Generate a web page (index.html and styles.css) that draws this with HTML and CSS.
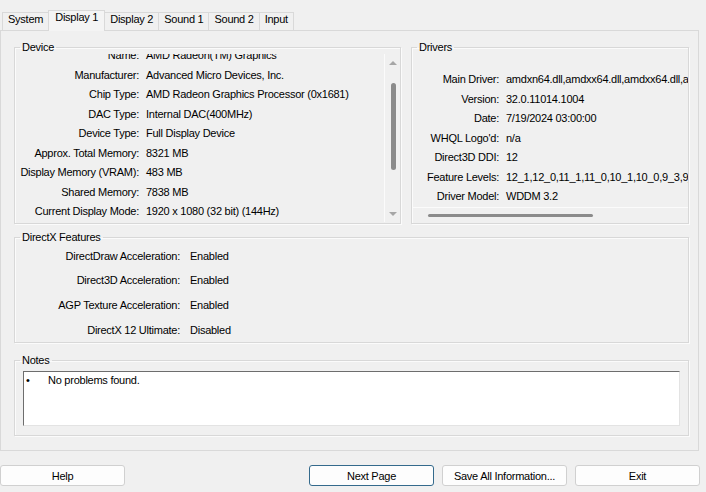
FILE: index.html
```html
<!DOCTYPE html>
<html>

<head>
    <meta name="viewport" content="width=device-width, initial-scale=1">
    <title>DirectX Diagnostic Tool</title>

    <link rel="stylesheet" href="styles.css">

</head>

<body>
    <div class="tabs">
        <div class="tab">System</div>
        <div class="tab active">Display 1</div>
        <div class="tab">Display 2</div>
        <div class="tab">Sound 1</div>
        <div class="tab">Sound 2</div>
        <div class="tab">Input</div>
    </div>

    <div class="panel">
        <div class="top">
            <fieldset class="group">
                <legend>Device</legend>
                <div class="device-body">
                    <div class="device-view">
                        <div class="rows device-rows">
                            <span class="label">Name:</span><span>AMD Radeon(TM) Graphics</span>
                            <span class="label">Manufacturer:</span><span>Advanced Micro Devices, Inc.</span>
                            <span class="label">Chip Type:</span><span>AMD Radeon Graphics Processor (0x1681)</span>
                            <span class="label">DAC Type:</span><span>Internal DAC(400MHz)</span>
                            <span class="label">Device Type:</span><span>Full Display Device</span>
                            <span class="label">Approx. Total Memory:</span><span>8321 MB</span>
                            <span class="label">Display Memory (VRAM):</span><span>483 MB</span>
                            <span class="label">Shared Memory:</span><span>7838 MB</span>
                            <span class="label">Current Display Mode:</span><span>1920 x 1080 (32 bit) (144Hz)</span>
                        </div>
                    </div>
                    <div class="vscroll">
                        <span class="arrow-up"></span>
                        <span class="vthumb"></span>
                        <span class="arrow-down"></span>
                    </div>
                </div>
            </fieldset>

            <fieldset class="group">
                <legend>Drivers</legend>
                <div class="drivers-view">
                    <div class="rows driver-rows">
                        <span class="label">Main Driver:</span><span>amdxn64.dll,amdxx64.dll,amdxx64.dll,amdxc64.dll</span>
                        <span class="label">Version:</span><span>32.0.11014.1004</span>
                        <span class="label">Date:</span><span>7/19/2024 03:00:00</span>
                        <span class="label">WHQL Logo'd:</span><span>n/a</span>
                        <span class="label">Direct3D DDI:</span><span>12</span>
                        <span class="label">Feature Levels:</span><span>12_1,12_0,11_1,11_0,10_1,10_0,9_3,9_2,9_1</span>
                        <span class="label">Driver Model:</span><span>WDDM 3.2</span>
                    </div>
                </div>
                <div class="hscroll"><span class="hthumb"></span></div>
            </fieldset>
        </div>

        <fieldset class="group features">
            <legend>DirectX Features</legend>
            <div class="rows feature-rows">
                <span class="label">DirectDraw Acceleration:</span><span>Enabled</span>
                <span class="label">Direct3D Acceleration:</span><span>Enabled</span>
                <span class="label">AGP Texture Acceleration:</span><span>Enabled</span>
                <span class="label">DirectX 12 Ultimate:</span><span>Disabled</span>
            </div>
        </fieldset>

        <fieldset class="group notes">
            <legend>Notes</legend>
            <div class="notes-box">
                <div class="note"><span class="bullet">&bull;</span><span>No problems found.</span></div>
            </div>
        </fieldset>
    </div>

    <div class="buttons">
        <button class="btn">Help</button>
        <div class="right-buttons">
            <button class="btn default">Next Page</button>
            <button class="btn">Save All Information...</button>
            <button class="btn">Exit</button>
        </div>
    </div>
</body>

</html>
```

FILE: styles.css
```css
body {
    margin: 0;
    background-color: #f0f0f0;
    font-family: "Liberation Sans", Arial, sans-serif;
    font-size: 11px;
    letter-spacing: -0.25px;
    color: #000;
}

/* Tab strip */
.tabs {
    display: flex;
    align-items: flex-end;
    padding: 10px 0 0 3px;
    position: relative;
    z-index: 1;
}

.tab {
    border: 1px solid #d9d9d9;
    border-bottom: none;
    margin-left: -1px;
    margin-bottom: 1px;
    padding: 0 5px 4px;
    line-height: 13px;
    background-color: #f0f0f0;
}

.tab.active {
    padding: 0 6px 7px;
    margin-bottom: 0;
    background-color: #f4f4f4;
    position: relative;
    z-index: 2;
}

/* Tab page */
.panel {
    margin: -1px 7px 0 0;
    border: 1px solid #d9d9d9;
    padding: 10px 9px 14px 13px;
}

.group {
    margin: 0;
    padding: 0;
    min-width: 0;
    border: 1px solid #d8d8d8;
    box-shadow: inset 1px 1px 0 #fbfbfb, 1px 1px 0 #fbfbfb;
}

.group legend {
    margin-left: 5px;
    padding: 0 2px;
    line-height: 13px;
}

.top {
    display: grid;
    grid-template-columns: 387px 1fr;
    column-gap: 10px;
}

.rows {
    display: grid;
    white-space: nowrap;
}

.label {
    text-align: right;
}

/* Device list with its scrollbar */
.device-body {
    display: flex;
    height: 168px;
}

.device-view {
    flex: 1;
    overflow: hidden;
}

.device-rows {
    margin-top: -8px;
    grid-template-columns: 124px 1fr;
    column-gap: 7px;
    line-height: 19.5px;
}

.vscroll {
    width: 16px;
    border-left: 1px solid #fbfbfb;
    display: flex;
    flex-direction: column;
    align-items: center;
    padding: 7px 0 6px 1px;
    box-sizing: border-box;
}

.arrow-up,
.arrow-down {
    width: 0;
    height: 0;
    border-left: 4px solid transparent;
    border-right: 4px solid transparent;
}

.arrow-up {
    border-bottom: 4px solid #a6a6a6;
}

.arrow-down {
    margin-top: auto;
    border-top: 4px solid #a6a6a6;
}

.vthumb {
    margin-top: 18px;
    width: 5px;
    height: 87px;
    border-radius: 3px;
    background-color: #8b8b8b;
}

/* Drivers */
.drivers-view {
    overflow: hidden;
    padding-top: 16px;
}

.driver-rows {
    grid-template-columns: 87px max-content;
    column-gap: 7px;
    line-height: 19.5px;
}

.hscroll {
    height: 16px;
    border-top: 1px solid #fbfbfb;
    box-sizing: border-box;
    padding: 6px 0 0 16px;
}

.hthumb {
    display: block;
    width: 165px;
    height: 3px;
    border-radius: 2px;
    background-color: #8b8b8b;
}

/* DirectX Features */
.features {
    margin-top: 7px;
}

.feature-rows {
    grid-template-columns: 165px max-content;
    column-gap: 10px;
    line-height: 24.7px;
}

/* Notes */
.notes {
    margin-top: 11px;
}

.notes-box {
    height: 55px;
    margin: 4px 8px 9px;
    box-sizing: border-box;
    background-color: #fff;
    border-top: 1px solid #6d6d6d;
    border-left: 1px solid #6d6d6d;
    border-right: 1px solid #e3e3e3;
    border-bottom: 1px solid #e3e3e3;
    padding: 2px 0 0 2px;
    line-height: 13px;
}

.note {
    display: flex;
}

.bullet {
    width: 22px;
}

/* Bottom buttons */
.buttons {
    display: flex;
    justify-content: space-between;
    padding: 14px 6px 0 0;
}

.right-buttons {
    display: flex;
    gap: 8px;
}

.btn {
    width: 125px;
    height: 21px;
    padding: 0;
    border: 1px solid #d0d0d0;
    border-radius: 3px;
    background-color: #fdfdfd;
    font-family: "Liberation Sans", Arial, sans-serif;
    font-size: 11px;
    letter-spacing: -0.25px;
    color: #000;
}

.btn.default {
    border-color: #346a8c;
}
```
